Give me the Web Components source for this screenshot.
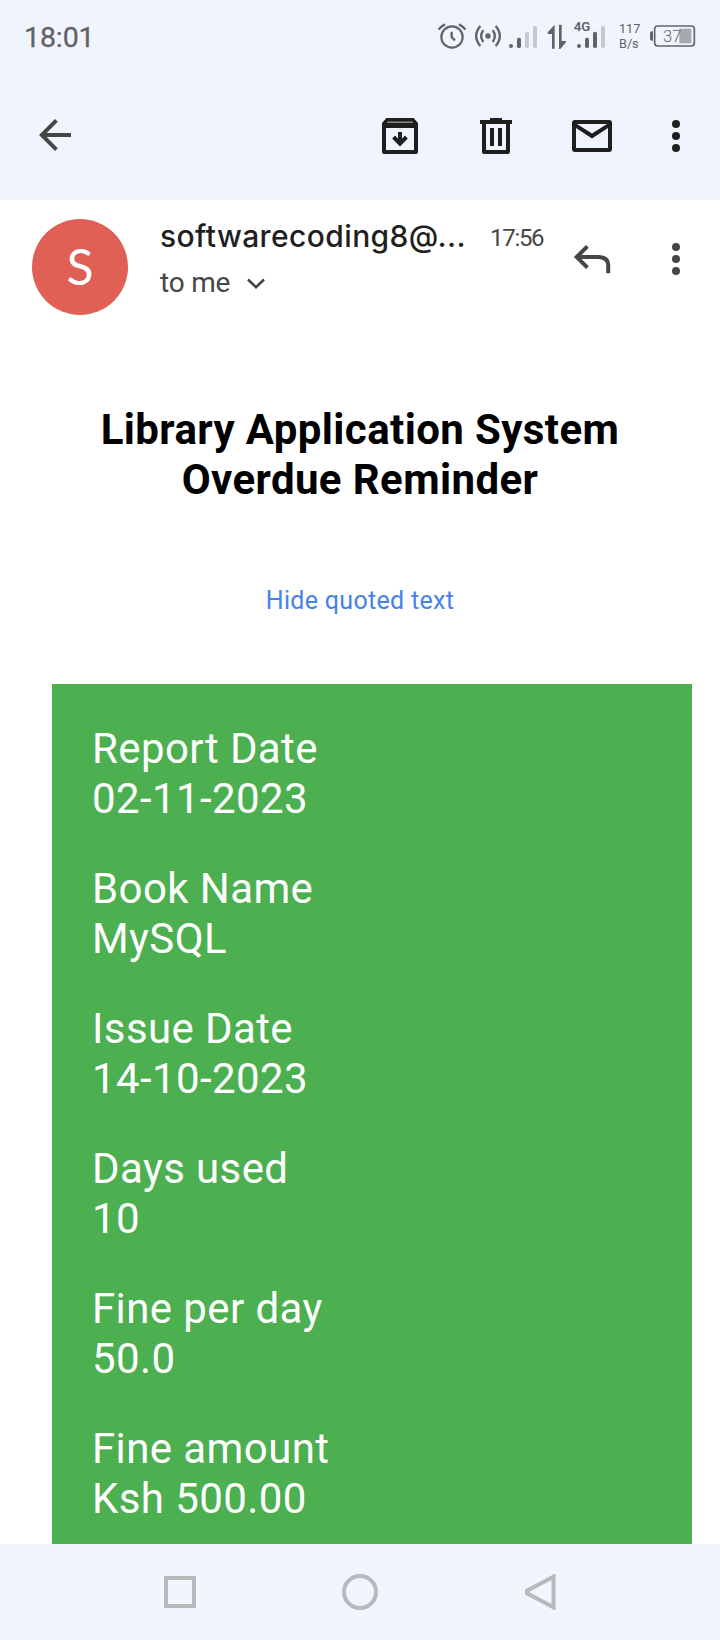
<!DOCTYPE html>
<html lang="en">
<head>
<meta charset="utf-8">
<title>Mail</title>
<style>
html,body{margin:0;height:1640px;overflow:hidden;background:#fff}
body{font-family:Roboto,sans-serif}
</style>
</head>
<body>
<mail-screen></mail-screen>
<script>
const define=(name,css,html)=>customElements.define(name,class extends HTMLElement{
  constructor(){super();this.attachShadow({mode:'open'}).innerHTML=`<style>${css}</style>${html}`;}
});

const ICONS={
  back:['0 0 24 24','<path d="M20 11H7.83l5.59-5.59L12 4l-8 8 8 8 1.41-1.41L7.83 13H20z"/>'],
  archive:['0 0 24 24','<path fill-rule="evenodd" d="M5.2 3h13.6L21 5.5V19.7Q21 21 19.7 21H4.3Q3 21 3 19.7V5.5ZM5.7 4.9 5.4 5.2H18.6L18.3 4.9ZM5 8V19H19V8Z"/><path d="M11 10h2v3.2l1.5-1.4 1.4 1.4L12 17.2l-3.9-4 1.4-1.4 1.5 1.4z"/>'],
  trash:['0 0 24 24','<path fill-rule="evenodd" d="M9 3h6v1h5v2h-1v13.7Q19 21 17.7 21H6.300Q5 21 5 19.700V6H4V4h5ZM7 6V19H17V6ZM9 8h2v9H9ZM13 8h2v9h-2Z"/>'],
  mail:['0 0 24 24','<path fill-rule="evenodd" d="M3.500 4h17Q22 4 22 5.500v13Q22 20 20.500 20h-17Q2 20 2 18.500v-13Q2 4 3.500 4ZM4 8V18H20V8l-8 5.200ZM4.500 6 12 10.800 19.500 6Z"/>'],
  more:['0 0 24 24','<circle cx="12" cy="6" r="2"/><circle cx="12" cy="12" r="2"/><circle cx="12" cy="18" r="2"/>'],
  reply:['0 0 48 48','<path d="M19.400 9.300 8.700 20l10.700 10.700M9 20H30Q40.200 20 40.200 28.500V36.300" fill="none" stroke="currentColor" stroke-width="4"/>'],
  chevron:['0 0 20 14','<path d="M2 2.500 10 10.300 18 2.500" fill="none" stroke="currentColor" stroke-width="2.600"/>'],
  alarm:['48 0 96 240','<g fill="none" stroke="currentColor" stroke-width="6.500"><circle cx="96" cy="111" r="32"/><path d="M95 95V112L105 121M56 89Q63 79 75 73M117 73Q129 79 136 89" stroke-width="7"/></g>'],
  hotspot:['144 0 108 240','<circle cx="204" cy="108" r="8"/><path d="M190 91Q177 108 190 126M218 91Q231 108 218 126M181 78Q156 108 181 138M227 78Q252 108 227 138" fill="none" stroke="currentColor" stroke-width="7"/>'],
  signal:['252 0 114 240','<circle cx="273" cy="138" r="6"/><rect x="291" y="113" width="12" height="31" rx="5"/><g fill="#c4c8cf"><rect x="315" y="95" width="12" height="49" rx="5"/><rect x="339" y="78" width="12" height="66" rx="5"/></g>'],
  data:['366 0 87 240','<path d="M404 74V146H396V102H383V97ZM417 74H425V123H438V127L421 147H417Z"/>'],
  signal4g:['453 0 117 240','<text x="461" y="94" font-family="Roboto" font-weight="600" font-size="39" textLength="50" lengthAdjust="spacingAndGlyphs">4G</text><circle cx="477" cy="138" r="6"/><rect x="495" y="113" width="12" height="31" rx="5"/><rect x="519" y="95" width="12" height="49" rx="5"/><rect x="543" y="78" width="12" height="66" rx="5" fill="#c4c8cf"/>'],
  speed:['570 0 108 240','<g font-family="Roboto" font-size="39"><text x="597" y="99" textLength="64" lengthAdjust="spacingAndGlyphs">117</text><text x="597" y="144" textLength="59" lengthAdjust="spacingAndGlyphs">B/s</text></g>'],
  battery:['678 0 150 240','<rect x="778" y="86" width="36" height="44" fill="#a5a8ad"/><rect x="704" y="78" width="119" height="60" rx="9" fill="none" stroke="currentColor" stroke-width="5"/><path d="M699 94V122H696Q690 122 690 117V99Q690 94 696 94Z"/><text x="729" y="126" font-family="Roboto" font-weight="350" font-size="50" textLength="55" lengthAdjust="spacingAndGlyphs">37</text>'],
  square:['0 0 36 36','<rect x="4" y="4" width="28" height="28" fill="none" stroke="currentColor" stroke-width="4"/>'],
  circle:['0 0 36 36','<circle cx="18" cy="18" r="16" fill="none" stroke="currentColor" stroke-width="4"/>'],
  triangle:['0 0 36 36','<path d="M31.500 2.700V33.300L5 19.200V16.800Z" fill="none" stroke="currentColor" stroke-width="4"/>']
};
customElements.define('ui-icon',class extends HTMLElement{
  constructor(){super();this.attachShadow({mode:'open'});}
  connectedCallback(){
    const [box,art]=ICONS[this.getAttribute('name')];
    this.shadowRoot.innerHTML=`<style>:host{display:block;flex:none;width:48px;height:48px}svg{display:block;width:100%;height:100%;fill:currentColor}</style><svg viewBox="${box}">${art}</svg>`;
  }
});

define('status-bar',`
:host{display:flex;height:72px;color:#606368;box-sizing:border-box;padding-left:24px}
time{font-size:28.500px;line-height:33px;padding-top:21px;width:412px;letter-spacing:-.1px;font-weight:400;-webkit-text-stroke:.3px currentColor}
ui-icon{height:80px}
`,`<time>18:01</time>
<ui-icon name="alarm" style="width:32px"></ui-icon><ui-icon name="hotspot" style="width:36px"></ui-icon><ui-icon name="signal" style="width:38px"></ui-icon><ui-icon name="data" style="width:29px"></ui-icon><ui-icon name="signal4g" style="width:39px"></ui-icon><ui-icon name="speed" style="width:36px"></ui-icon><ui-icon name="battery" style="width:50px"></ui-icon>`);

define('action-bar',`
:host{display:flex;align-items:flex-start;height:128px;box-sizing:border-box;padding:40px 20px 0 31px;color:#1f1f1f}
.back{color:#444746;margin-top:-1px;margin-right:auto}
.group{display:grid;grid-template-columns:96px 96px 84px 48px}
`,`<ui-icon class="back" name="back"></ui-icon><div class="group"><ui-icon name="archive"></ui-icon><ui-icon name="trash"></ui-icon><ui-icon name="mail"></ui-icon><ui-icon name="more"></ui-icon></div>`);

define('sender-avatar',`
:host{display:flex;align-items:center;justify-content:center;width:96px;height:96px;border-radius:50%;background:#e06055;color:#fff;font:400 50px/94px Lato,sans-serif;flex:none}
span{display:block;height:96px}
`,`<span><slot></slot></span>`);

define('message-header',`
:host{display:flex;align-items:flex-start;box-sizing:border-box;height:200px;padding:19px 20px 0 32px;color:#444746}
.who{padding-left:32px;width:330px;flex:none}
.name{color:#1f1f1f;font:500 30px/34px Inter,sans-serif;height:46px;white-space:nowrap;letter-spacing:.4px}
.to{display:flex;align-items:center;font-size:28px;line-height:36px;gap:16px;letter-spacing:-.2px}
.to ui-icon{width:20px;height:14px;margin-top:1px}
time{font-size:24px;line-height:30px;padding-top:4px;width:78px;letter-spacing:-1.300px;white-space:nowrap}
.reply{margin-top:18px;width:48px}
.more{margin:16px 0 0 auto}
`,`<sender-avatar>S</sender-avatar><div class="who"><div class="name"><slot name="from"></slot></div><div class="to"><span>to me</span><ui-icon name="chevron"></ui-icon></div></div><time><slot name="time"></slot></time><ui-icon class="reply" name="reply"></ui-icon><ui-icon class="more" name="more"></ui-icon>`);

define('report-row',`
:host{display:block;font-size:42px;line-height:50px;letter-spacing:.4px;color:#fff;white-space:nowrap}
`,`<div><slot name="label"></slot></div><div><slot></slot></div>`);

define('report-card',`
:host{display:flex;flex-direction:column;gap:40px;box-sizing:border-box;width:640px;height:860px;margin-left:52px;padding:40px;background:#4caf50;overflow:hidden}
`,`<slot></slot>`);

define('message-body',`
:host{display:block}
h1{margin:0;padding-top:5px;font:700 42px/50px Roboto,sans-serif;letter-spacing:.4px;text-align:center;color:#000}
.quote{text-align:center;color:#4683e6;font-size:25px;line-height:30px;letter-spacing:.3px;padding:81px 0 68px}
`,`<h1>Library Application System<br>Overdue Reminder</h1><div class="quote">Hide quoted text</div>
<report-card>
<report-row><span slot="label">Report Date</span>02-11-2023</report-row>
<report-row><span slot="label">Book Name</span>MySQL</report-row>
<report-row><span slot="label">Issue Date</span>14-10-2023</report-row>
<report-row><span slot="label">Days used</span>10</report-row>
<report-row><span slot="label">Fine per day</span>50.0</report-row>
<report-row><span slot="label">Fine amount</span>Ksh 500.00</report-row>
</report-card>`);

define('nav-bar',`
:host{display:flex;justify-content:space-between;align-items:center;height:96px;box-sizing:border-box;padding:0 162px;background:#f2f5fd;color:#b8b9bc}
ui-icon{width:36px;height:36px}
`,`<ui-icon name="square"></ui-icon><ui-icon name="circle"></ui-icon><ui-icon name="triangle"></ui-icon>`);

define('mail-screen',`
:host{display:grid;grid-template-rows:200px 1344px 96px;width:720px;height:1640px;background:#fff;overflow:hidden}
.top{background:#f0f4fc}
`,`<div class="top"><status-bar></status-bar><action-bar></action-bar></div>
<main><message-header><span slot="from">softwarecoding8@...</span><span slot="time">17:56</span></message-header><message-body></message-body></main>
<nav-bar></nav-bar>`);
</script>
</body>
</html>
